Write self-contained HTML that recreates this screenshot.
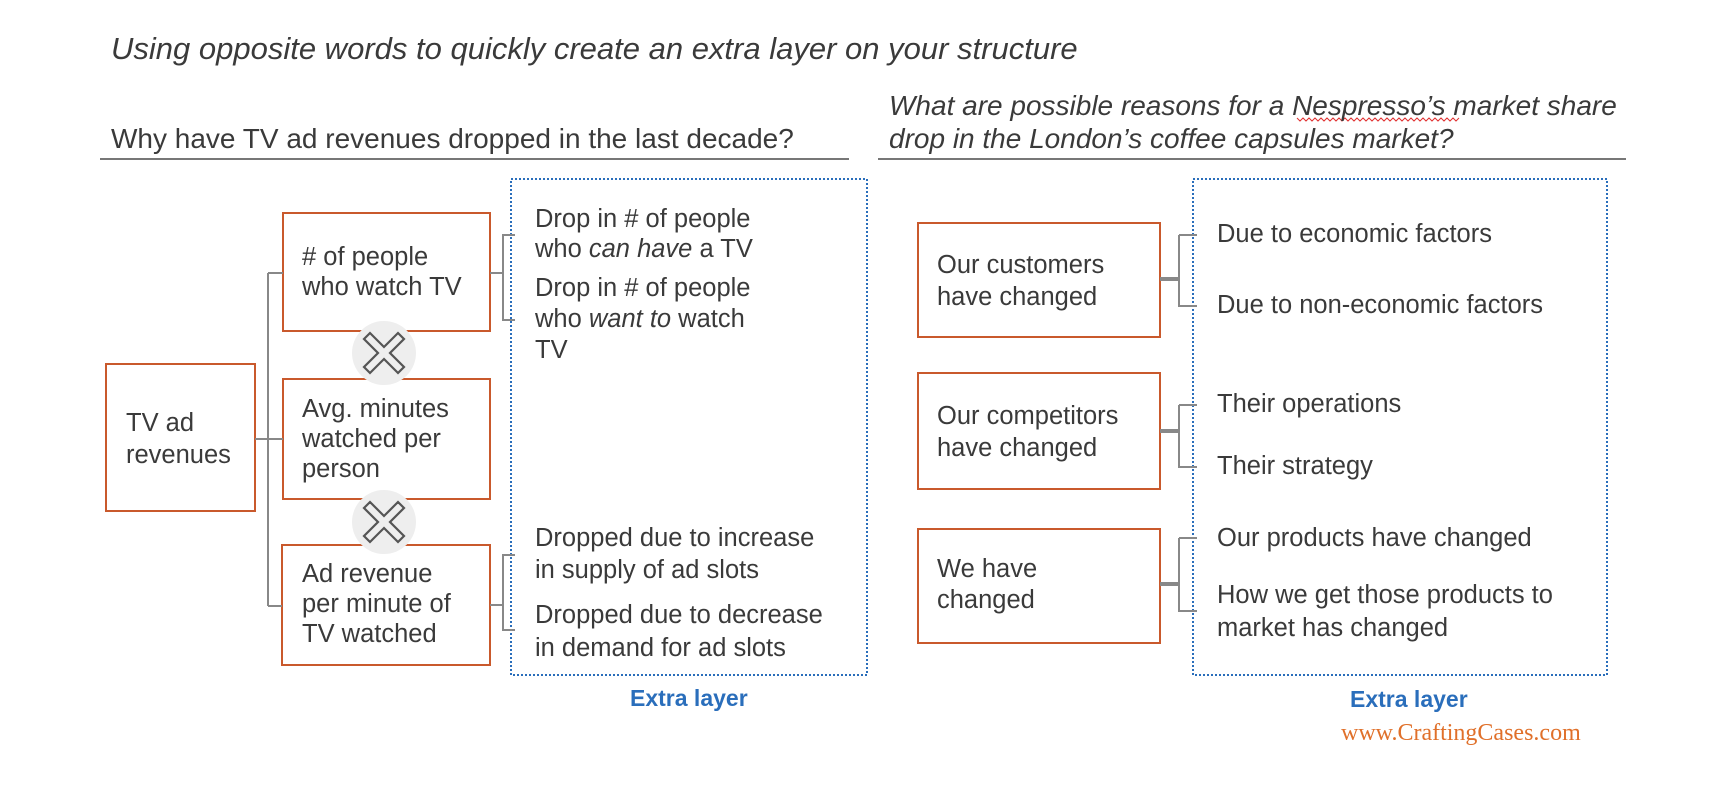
<!DOCTYPE html>
<html><head><meta charset="utf-8"><style>
body{margin:0;width:1736px;height:796px;background:#fff;position:relative;overflow:hidden;font-family:"Liberation Sans",Arial,sans-serif;color:#3a3a3a}
.t{position:absolute;font-size:25.5px;line-height:30px;white-space:nowrap}
.i{font-style:italic}
.xl{position:absolute;font-size:23px;font-weight:bold;color:#2a6ebb;white-space:nowrap;line-height:23px}
svg{position:absolute;left:0;top:0}
</style></head><body>
<svg width="1736" height="796" viewBox="0 0 1736 796">
<g fill="none">
<line x1="100" y1="159" x2="849" y2="159" stroke="#777" stroke-width="2"/>
<line x1="878" y1="159" x2="1626" y2="159" stroke="#777" stroke-width="2"/>
<path d="M1297 118 l3 3 l3 -3 l3 3 l3 -3 l3 3 l3 -3 l3 3 l3 -3 l3 3 l3 -3 l3 3 l3 -3 l3 3 l3 -3 l3 3 l3 -3 l3 3 l3 -3 l3 3 l3 -3 l3 3 l3 -3 l3 3 l3 -3 l3 3 l3 -3 l3 3 l3 -3 l3 3 l3 -3 l3 3 l3 -3 l3 3 l3 -3 l3 3 l3 -3 l3 3 l3 -3 l3 3 l3 -3 l3 3 l3 -3 l3 3 l3 -3 l3 3 l3 -3 l3 3 l3 -3 l3 3 l3 -3 l3 3 l3 -3 l3 3 l3 -3" stroke="#e03030" stroke-width="1"/>
<rect x="511" y="179" width="356" height="496" stroke="#2a6ebb" stroke-width="2" stroke-dasharray="2 2"/>
<rect x="1193" y="179" width="414" height="496" stroke="#2a6ebb" stroke-width="2" stroke-dasharray="2 2"/>
<g stroke="#c9592c" stroke-width="2">
<rect x="106" y="364" width="149" height="147"/>
<rect x="283" y="213" width="207" height="118"/>
<rect x="283" y="379" width="207" height="120"/>
<rect x="282" y="545" width="208" height="120"/>
<rect x="918" y="223" width="242" height="114"/>
<rect x="918" y="373" width="242" height="116"/>
<rect x="918" y="529" width="242" height="114"/>
</g>
<g stroke="#888" stroke-width="2">
<path d="M255 439 H268 M268 273 V606 M268 273 H283 M268 439 H283 M268 606 H282"/>
<path d="M490 273 H503 M515 235 H503 V320 H515"/>
<path d="M490 605 H503 M515 555 H503 V630 H515"/>
<path d="M1179 235 H1197 M1179 235 V306 H1197"/>
<path d="M1179 405 H1197 M1179 405 V467 H1197"/>
<path d="M1179 538 H1197 M1179 538 V611 H1197"/>
</g>
<g stroke="#888" stroke-width="4">
<path d="M1160 279 H1179 M1160 431 H1179 M1160 584 H1179"/>
</g>
<circle cx="384" cy="353" r="32" fill="#eee"/>
<circle cx="384" cy="522" r="32" fill="#eee"/>
<g stroke="#555" stroke-width="2.2" stroke-linejoin="miter">
<path transform="translate(364 333)" d="M0 6 L6 0 L20 14 L34 0 L40 6 L26 20 L40 34 L34 40 L20 26 L6 40 L0 34 L14 20 Z"/>
<path transform="translate(364 502)" d="M0 6 L6 0 L20 14 L34 0 L40 6 L26 20 L40 34 L34 40 L20 26 L6 40 L0 34 L14 20 Z"/>
</g>
</g>
</svg>

<div class="t i" style="left:111px;top:33px;font-size:31px;line-height:31px">Using opposite words to quickly create an extra layer on your structure</div>
<div class="t" style="left:111px;top:124px;font-size:28px">Why have TV ad revenues dropped in the last decade?</div>
<div class="t i" style="left:889px;top:89px;line-height:33px;font-size:28px">What are possible reasons for a Nespresso’s market share<br>drop in the London’s coffee capsules market?</div>

<div class="t" style="left:126px;top:407px;line-height:32px">TV ad<br>revenues</div>
<div class="t" style="left:302px;top:242px">#&nbsp;of people<br>who watch TV</div>
<div class="t" style="left:302px;top:394px">Avg. minutes<br>watched per<br>person</div>
<div class="t" style="left:302px;top:559px">Ad revenue<br>per minute of<br>TV watched</div>

<div class="t" style="left:535px;top:204px">Drop in # of people<br>who <i>can have</i> a TV</div>
<div class="t" style="left:535px;top:273px;line-height:31px">Drop in # of people<br>who <i>want to</i> watch<br>TV</div>
<div class="t" style="left:535px;top:522px;line-height:32px">Dropped due to increase<br>in supply of ad slots</div>
<div class="t" style="left:535px;top:599px;line-height:33px">Dropped due to decrease<br>in demand for ad slots</div>
<div class="xl" style="left:630px;top:687px">Extra layer</div>

<div class="t" style="left:937px;top:249px;line-height:32px">Our customers<br>have changed</div>
<div class="t" style="left:937px;top:400px;line-height:32px">Our competitors<br>have changed</div>
<div class="t" style="left:937px;top:554px;line-height:31px">We have<br>changed</div>

<div class="t" style="left:1217px;top:219px">Due to economic factors</div>
<div class="t" style="left:1217px;top:290px">Due to non-economic factors</div>
<div class="t" style="left:1217px;top:389px">Their operations</div>
<div class="t" style="left:1217px;top:451px">Their strategy</div>
<div class="t" style="left:1217px;top:523px">Our products have changed</div>
<div class="t" style="left:1217px;top:579px;line-height:33px">How we get those products to<br>market has changed</div>
<div class="xl" style="left:1350px;top:688px">Extra layer</div>

<div style="position:absolute;left:1341px;top:721px;font-family:'Liberation Serif',serif;font-size:24px;color:#e0702a;white-space:nowrap;line-height:25px">www.CraftingCases.com</div>
</body></html>
